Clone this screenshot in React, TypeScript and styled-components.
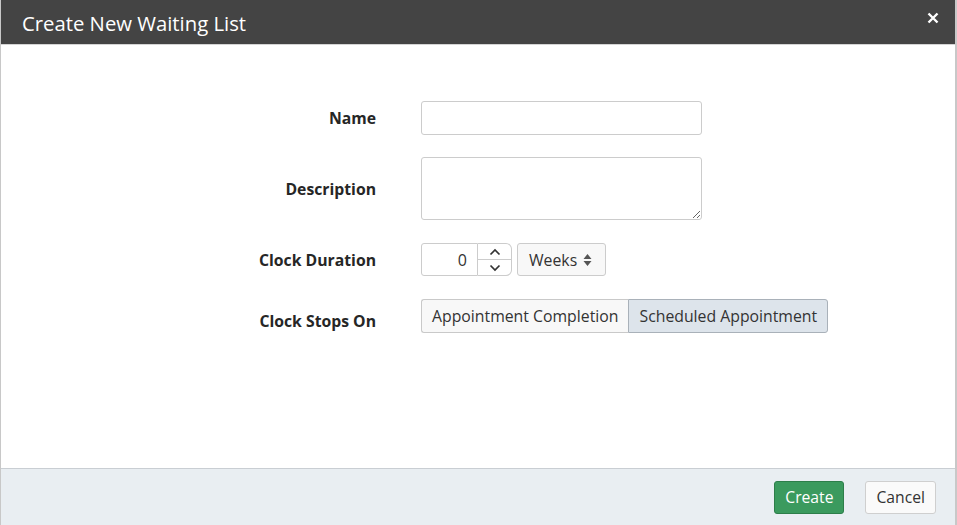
import React from "react";
import styled, { createGlobalStyle } from "styled-components";

const Global = createGlobalStyle`
  html, body { margin: 0; padding: 0; background: #fff; }
  body { font-family: "Open Sans", "Liberation Sans", sans-serif; color: #222; }
  * { box-sizing: border-box; }
`;

const Modal = styled.div`
  width: 957px;
  height: 525px;
  display: flex;
  flex-direction: column;
  border-left: 1px solid #c8c8c8;
  border-right: 2px solid #c8c8c8;
  background: #fff;
`;

const Header = styled.div`
  height: 45px;
  background: #444444;
  display: flex;
  align-items: center;
  justify-content: space-between;
  padding: 0 14px 0 21px;
  border-bottom: 1px solid #d4d4d4;
`;

const Title = styled.h1`
  margin: 0;
  font-size: 20.3px;
  font-weight: 400;
  color: #fff;
  padding-top: 1px;
`;

const Close = styled.button`
  border: none;
  background: none;
  color: #fff;
  padding: 0;
  width: 16px;
  height: 16px;
  margin-top: -9px;
  display: flex;
  align-items: center;
  justify-content: center;
`;

const Body = styled.div`
  flex: 1;
  padding: 56px 0 0 0;
  display: grid;
  grid-template-columns: 375px auto;
  column-gap: 45px;
  row-gap: 22px;
  align-content: start;
`;

const Label = styled.label<{ $h: number; $drop?: number }>`
  height: ${(p) => p.$h}px;
  display: flex;
  align-items: center;
  justify-content: flex-end;
  padding-top: ${(p) => (p.$drop ? p.$drop * 2 : 0)}px;
  font-weight: 700;
  font-size: 15.75px;
  color: #262626;
`;

const Field = styled.div<{ $h?: number }>`
  display: flex;
  align-items: flex-start;
  gap: 5px;
  ${(p) => (p.$h ? `height: ${p.$h}px;` : "")}
`;

const TextInput = styled.input`
  width: 281px;
  height: 34px;
  border: 1px solid #ccc;
  border-radius: 3px;
  font: inherit;
`;

const TextArea = styled.textarea`
  width: 281px;
  height: 63px;
  border: 1px solid #ccc;
  border-radius: 3px;
  font: inherit;
  display: block;
`;

const NumberGroup = styled.div`
  display: flex;
  height: 33px;
`;

const NumberBox = styled.div`
  width: 57px;
  height: 33px;
  border: 1px solid #ccc;
  border-radius: 3px 0 0 3px;
  display: flex;
  align-items: center;
  justify-content: flex-end;
  padding-right: 10px;
  font-size: 16px;
  color: #333;
`;

const Spinner = styled.div`
  width: 34px;
  height: 33px;
  border: 1px solid #ccc;
  border-left: none;
  border-radius: 0 6px 6px 0;
  display: flex;
  flex-direction: column;
`;

const SpinHalf = styled.div<{ $top?: boolean }>`
  flex: 1;
  display: flex;
  align-items: center;
  justify-content: center;
  border-bottom: ${(p) => (p.$top ? "1px solid #ccc" : "none")};
`;

const Select = styled.div`
  height: 33px;
  width: 89px;
  border: 1px solid #ccc;
  border-radius: 3px;
  background: #f8f8f8;
  display: flex;
  align-items: center;
  gap: 6px;
  padding-left: 11px;
  font-size: 15.8px;
  color: #333;
`;

const Toggle = styled.div`
  display: flex;
  height: 34px;
  margin-top: 1px;
`;

const ToggleBtn = styled.button<{ $active?: boolean; $first?: boolean }>`
  font: inherit;
  font-size: 15.8px;
  color: #333;
  height: 34px;
  padding: 0 10px;
  border: 1px solid ${(p) => (p.$active ? "#a9b1b9" : "#c9c9c9")};
  background: ${(p) => (p.$active ? "#dde4eb" : "#f8f8f8")};
  border-radius: ${(p) => (p.$first ? "3px 0 0 3px" : "0 3px 3px 0")};
  ${(p) => (p.$first ? "border-right: none;" : "")}
`;

const Footer = styled.div`
  height: 57px;
  background: #e9eef2;
  border-top: 1px solid #c9ced3;
  display: flex;
  align-items: center;
  justify-content: flex-end;
  gap: 21px;
  padding: 0 19px 0 0;
`;

const Btn = styled.button<{ $primary?: boolean }>`
  font: inherit;
  font-size: 15.7px;
  height: 33px;
  padding: 0 10px;
  border-radius: 3px;
  border: 1px solid ${(p) => (p.$primary ? "#2d7e4a" : "#cfcfcf")};
  background: ${(p) => (p.$primary ? "#3b9a5e" : "#fafafa")};
  color: ${(p) => (p.$primary ? "#fff" : "#333")};
`;

export default function App() {
  return (
    <>
      <Global />
      <Modal>
        <Header>
          <Title>Create New Waiting List</Title>
          <Close aria-label="Close">
            <svg width="12" height="12" viewBox="0 0 12 12">
              <path d="M1.5 1.5 L10.5 10.5 M10.5 1.5 L1.5 10.5" stroke="#fff" strokeWidth="2.4" />
            </svg>
          </Close>
        </Header>
        <Body>
          <Label $h={34}>Name</Label>
          <Field>
            <TextInput />
          </Field>
          <Label $h={64}>Description</Label>
          <Field $h={64}>
            <TextArea />
          </Field>
          <Label $h={33}>Clock Duration</Label>
          <Field>
            <NumberGroup>
              <NumberBox>0</NumberBox>
              <Spinner>
                <SpinHalf $top>
                  <svg width="12" height="8" viewBox="0 0 12 8">
                    <path d="M1.5 6.5 L6 2 L10.5 6.5" fill="none" stroke="#333" strokeWidth="1.7" />
                  </svg>
                </SpinHalf>
                <SpinHalf>
                  <svg width="12" height="8" viewBox="0 0 12 8">
                    <path d="M1.5 1.5 L6 6 L10.5 1.5" fill="none" stroke="#333" strokeWidth="1.7" />
                  </svg>
                </SpinHalf>
              </Spinner>
            </NumberGroup>
            <Select>
              Weeks
              <svg width="9" height="14" viewBox="0 0 9 14">
                <path d="M4.5 1 L8.5 6 L0.5 6 Z M4.5 13 L8.5 8 L0.5 8 Z" fill="#555" />
              </svg>
            </Select>
          </Field>
          <Label $h={40} $drop={3}>Clock Stops On</Label>
          <Field>
            <Toggle>
              <ToggleBtn $first>Appointment Completion</ToggleBtn>
              <ToggleBtn $active>Scheduled Appointment</ToggleBtn>
            </Toggle>
          </Field>
        </Body>
        <Footer>
          <Btn $primary>Create</Btn>
          <Btn>Cancel</Btn>
        </Footer>
      </Modal>
    </>
  );
}
